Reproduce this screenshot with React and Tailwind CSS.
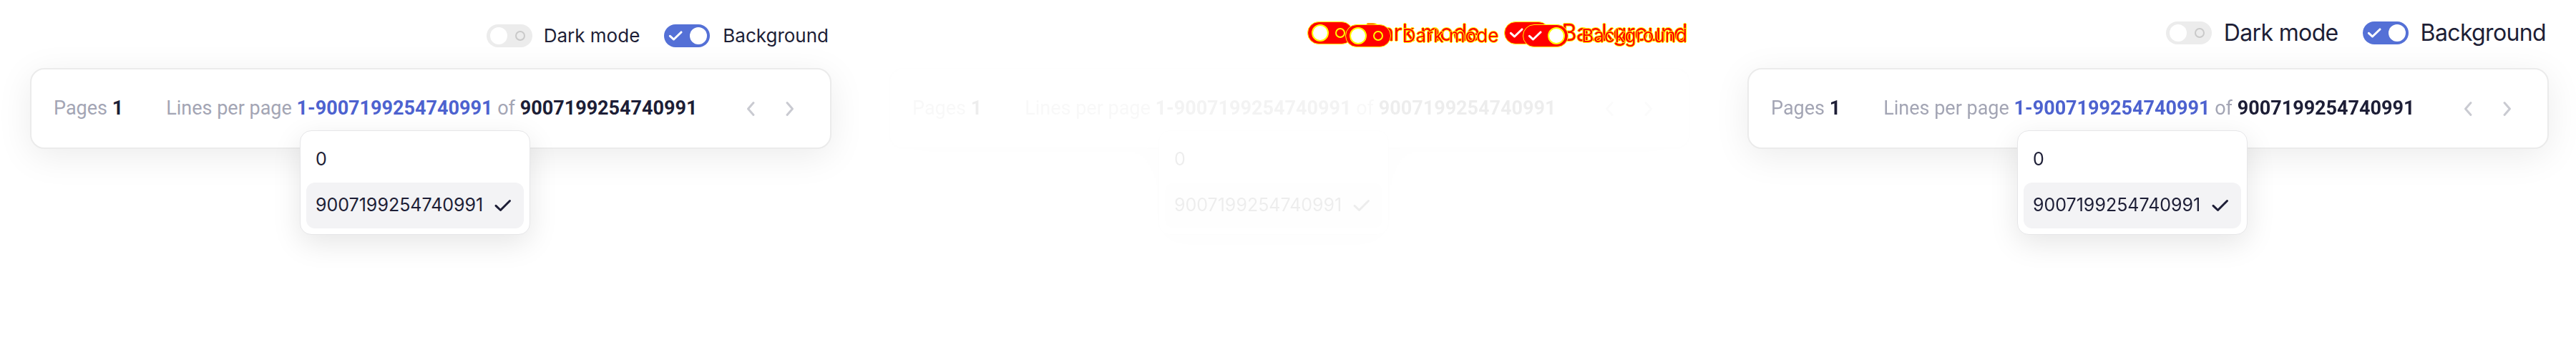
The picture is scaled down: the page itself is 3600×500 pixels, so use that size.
import React from "react";

const labelFont = { fontFamily: "Inter, 'Noto Sans', sans-serif" };
const cardFont = { fontFamily: "Roboto, 'Liberation Sans', sans-serif" };

function Check({ className, w = 20, h = 14, stroke = "#ffffff", sw = 3 }) {
  return (
    <svg width={w} height={h} viewBox={`0 0 ${w} ${h}`} className={className} fill="none">
      <path
        d={`M${w * 0.12} ${h * 0.52} L${w * 0.38} ${h * 0.86} L${w * 0.9} ${h * 0.14}`}
        stroke={stroke}
        strokeWidth={sw}
        strokeLinecap="round"
        strokeLinejoin="round"
      />
    </svg>
  );
}

function Toggle({ on, diff }) {
  if (on) {
    return (
      <div
        className={
          diff
            ? "flex h-8 w-16 shrink-0 items-center justify-between rounded-full border border-[#ffff00] bg-[#ff0000] pl-[6px] pr-1"
            : "flex h-8 w-16 shrink-0 items-center justify-between rounded-full bg-[#5470d6] pl-[6px] pr-1"
        }
      >
        <Check />
        <span className={diff ? "h-6 w-6 rounded-full border-2 border-[#ffff00] bg-white" : "h-6 w-6 rounded-full bg-white"} />
      </div>
    );
  }
  return (
    <div
      className={
        diff
          ? "flex h-8 w-16 shrink-0 items-center justify-between rounded-full border border-[#ffff00] bg-[#ff0000] px-[5px]"
          : "flex h-8 w-16 shrink-0 items-center justify-between rounded-full bg-[#ececec] px-[5px]"
      }
    >
      <span className={diff ? "h-6 w-6 rounded-full border-2 border-[#ffff00] bg-white" : "h-6 w-6 rounded-full bg-white"} />
      <span className={diff ? "mr-[5px] h-[14px] w-[14px] rounded-full border-2 border-[#ffff00]" : "mr-[5px] h-[14px] w-[14px] rounded-full border-2 border-[#c9c9c9]"} />
    </div>
  );
}

function ToggleRow({ big, diff }) {
  const text = big
    ? "text-[32px] leading-none tracking-[-0.02em]"
    : "text-[26px] leading-none";
  const color = diff
    ? "text-[#ff0000] [text-shadow:1px_0_#ffff00,-1px_0_#ffff00,0_1px_#ffff00,0_-1px_#ffff00]"
    : "text-[#1d1e36]";
  return (
    <div
      className={`flex h-8 items-center justify-end gap-[34px] pr-[42px] ${big ? "mt-[30px]" : "mt-[34px]"}`}
      style={labelFont}
    >
      <div className={`flex items-center ${big ? "gap-[17px]" : "gap-4"}`}>
        <Toggle diff={diff} />
        <span className={`${text} ${color}`}>Dark mode</span>
      </div>
      <div className={`flex items-center ${big ? "gap-[17px]" : "gap-[18px]"}`}>
        <Toggle on diff={diff} />
        <span className={`${text} ${color}`}>Background</span>
      </div>
    </div>
  );
}

function Chevron({ flip }) {
  return (
    <svg width="14" height="22" viewBox="0 0 14 22" fill="none" className={flip ? "rotate-180" : ""}>
      <path d="M11 2.5 L3.5 11 L11 19.5" stroke="#c9cad1" strokeWidth="3" strokeLinecap="round" strokeLinejoin="round" />
    </svg>
  );
}

function Dropdown() {
  return (
    <div
      className="absolute left-[375px] top-[85px] w-[322px] rounded-2xl border border-[#e6e6e8] bg-white p-2 text-[25px] text-[#1d1e36] shadow-[0_12px_40px_rgba(0,0,0,0.1)]"
      style={labelFont}
    >
      <div className="flex h-16 items-center px-[13px]">0</div>
      <div className="flex h-16 items-center gap-[15px] rounded-xl bg-[#f3f3f5] px-[13px]">
        <span>9007199254740991</span>
        <Check w={25} h={18} stroke="#1d1e36" sw={3} />
      </div>
    </div>
  );
}

function Card() {
  return (
    <div
      className="relative ml-[42px] flex h-[113px] w-[1120px] items-center rounded-[20px] border-2 border-[#ebebeb] bg-white pl-[31px] pr-[49px] text-[27px] text-[#a3a5b4] shadow-[0_10px_50px_rgba(0,0,0,0.08)]"
      style={cardFont}
    >
      <span>
        Pages <b className="font-bold text-[#1d1e36]">1</b>
      </span>
      <span className="ml-[60px]">
        Lines per page <b className="font-bold text-[#4d62cf]">1-9007199254740991</b> of{" "}
        <b className="font-bold text-[#1d1e36]">9007199254740991</b>
      </span>
      <div className="ml-auto flex items-center gap-[41px]">
        <Chevron />
        <Chevron flip />
      </div>
      <Dropdown />
    </div>
  );
}

function Panel({ big }) {
  return (
    <div className="h-[500px] w-[1200px] shrink-0 bg-white">
      <ToggleRow big={big} />
      <div className={big ? "mt-[33px]" : "mt-[29px]"}>
        <Card />
      </div>
    </div>
  );
}

function DiffPanel() {
  return (
    <div className="relative h-[500px] w-[1200px] shrink-0 bg-white">
      <div className="opacity-[0.08] grayscale">
        <Panel />
      </div>
      <div className="absolute inset-x-0 top-0">
        <ToggleRow big diff />
      </div>
      <div className="absolute inset-x-0 top-0">
        <ToggleRow diff />
      </div>
    </div>
  );
}

export default function App() {
  return (
    <div className="flex h-[500px] w-[3600px] overflow-hidden bg-white">
      <Panel />
      <DiffPanel />
      <Panel big />
    </div>
  );
}
